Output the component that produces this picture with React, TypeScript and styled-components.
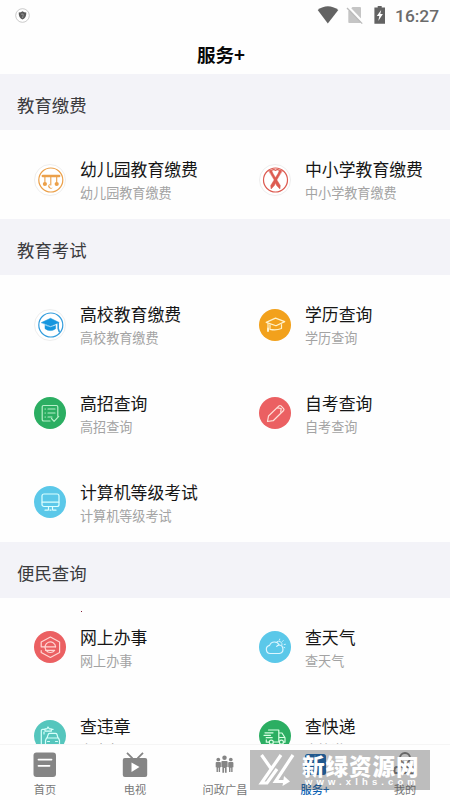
import React from "react";
import styled, { createGlobalStyle } from "styled-components";

const GlobalStyle = createGlobalStyle`
  * { box-sizing: border-box; }
  body { margin: 0; background: #fff; overflow: hidden; }
`;

const Screen = styled.div`
  position: relative;
  display: flex;
  flex-direction: column;
  width: 450px;
  height: 800px;
  overflow: hidden;
  background: #fefefe;
  font-family: "Noto Sans CJK SC", sans-serif;
`;

const StatusBar = styled.header`
  flex: none;
  display: flex;
  align-items: center;
  justify-content: space-between;
  height: 30px;
  padding: 0 10px 0 15px;
`;

const StatusIcons = styled.div`
  display: flex;
  align-items: center;
`;

const Clock = styled.span`
  width: 45px;
  margin-left: 10px;
  font: 500 17.4px/30px Roboto, sans-serif;
  color: #6b6b6b;
  padding-top: 2px;
`;

const TitleBar = styled.h1`
  flex: none;
  height: 44px;
  margin: 0;
  padding-right: 8px;
  text-align: center;
  font-size: 18.6px;
  font-weight: 700;
  line-height: 47px;
  color: #080808;
`;

const Content = styled.main`
  flex: 1;
  min-height: 0;
  overflow: hidden;
`;

const SectionTitle = styled.h2`
  height: 56.2px;
  margin: 0;
  padding-left: 17px;
  background: #f3f3f8;
  color: #3b3b3e;
  font-size: 17.4px;
  font-weight: 400;
  line-height: 61px;
`;

const Grid = styled.div`
  display: grid;
  grid-template-columns: 225px 225px;
  grid-auto-rows: 88.8px;
`;

const Service = styled.div`
  display: flex;
  padding: 26px 0 0 34px;
`;

const Badge = styled.span<{ $color?: string }>`
  flex: none;
  width: 32px;
  height: 32px;
  margin: 7.5px 14px 0 0;
  border-radius: 50%;
  background: ${(p) => p.$color ?? "#fff"};
  border: ${(p) => (p.$color ? "none" : "1px solid #eee")};
  display: flex;
  align-items: center;
  justify-content: center;
  svg { flex: none; display: block; }
`;

const ServiceName = styled.div`
  height: 26px;
  font-size: 16.85px;
  line-height: 26px;
  color: #161616;
  white-space: nowrap;
`;

const ServiceNote = styled.div`
  font-size: 13.1px;
  line-height: 22px;
  color: #a3a3a3;
  white-space: nowrap;
`;

const Dot = styled.i`
  position: absolute;
  left: 81px;
  top: 611px;
  width: 1px;
  height: 1px;
  background: #86213a;
`;

const TabBar = styled.nav`
  flex: none;
  display: grid;
  grid-template-columns: repeat(5, 90px);
  height: 56px;
  border-top: 1px solid #f5f5f5;
  background: #fefefe;
`;

const Tab = styled.div<{ $active?: boolean }>`
  display: flex;
  flex-direction: column;
  align-items: center;
  padding-top: 7px;
  font-size: 11.2px;
  line-height: 16px;
  color: ${(p) => (p.$active ? "#0c62b4" : "#777")};
  font-weight: ${(p) => (p.$active ? 500 : 400)};
  svg { display: block; margin-bottom: 3px; }
`;

const Watermark = styled.aside`
  position: absolute;
  left: 250px;
  top: 750px;
  width: 180px;
  height: 40px;
  display: flex;
  background: rgba(75, 75, 75, 0.36);
  color: #fff;
`;

const WatermarkWords = styled.div`
  display: flex;
  flex-direction: column;
  margin-left: 5px;
`;

const WatermarkName = styled.b`
  height: 26px;
  font-size: 22.5px;
  font-weight: 900;
  line-height: 30px;
  letter-spacing: 1px;
  white-space: nowrap;
`;

const WatermarkSite = styled.span`
  font: 700 9.5px/11px "Liberation Sans", sans-serif;
  letter-spacing: 4.1px;
  white-space: nowrap;
  padding-left: 3px;
`;

const Line = ({ children, color = "#fff" }: { children: React.ReactNode; color?: string }) => (
  <svg width="32" height="32" viewBox="0 0 32 32" fill="none" stroke={color} strokeWidth="1.2" strokeLinecap="round" strokeLinejoin="round">
    {children}
  </svg>
);

const icons = {
  mobile: (
    <Line color="#eba04a">
      <circle cx="16.8" cy="16" r="12" />
      <path d="M8.8 12h16.4" strokeWidth="2.4" />
      <path d="M10.9 13v6M16.8 13v8M22.7 13v6" strokeWidth="1.1" />
      <g fill="#eba04a" stroke="none">
        <circle cx="10.9" cy="20" r="2.1" />
        <circle cx="22.7" cy="20" r="2.1" />
        <path d="M16.4 19.8a2.5 2.5 0 1 0 2.4 3.8 2.2 2.2 0 0 1-2.4-3.8" />
      </g>
    </Line>
  ),
  scarf: (
    <Line color="#dd5b51">
      <circle cx="16.5" cy="16" r="12" />
      <g fill="#dd5b51" strokeWidth=".5">
        <path d="M10 6.8 12.3 5.8 14 9.5 18.2 16.5 21.3 21.5 20.9 25 17.6 21.5 15.2 16Z" />
        <path d="M23 6.8 20.7 5.8 19 9.5 14.8 16.5 11.7 21.5 12.1 25 15.4 21.5 17.8 16Z" />
      </g>
      <path d="M12.7 6.2q2.2-1.4 3.8.2 1.8-1.6 3.8-.2" />
    </Line>
  ),
  college: (
    <Line color="#339ddd">
      <circle cx="16.8" cy="16" r="12" />
      <g fill="#1696df" stroke="#1696df" strokeWidth=".5">
        <path d="m7.5 13.5 9-4.2 8.7 4.2-8.7 3.8Z" />
        <path d="M11 16.5v3.2q5.3 3.8 10.6 0v-3.2l-5.1 1.8Z" />
      </g>
      <path d="M24.2 14v5.5l1 3" strokeWidth="1.6" />
    </Line>
  ),
  cap: (
    <Line color="#fff2cb">
      <path d="m7.2 13.4 9.3-4.3 9.2 3.5-8.7 4.2Z" />
      <path d="M11 15.8v4.5q6 1.3 11.5-.8v-4M9 14.5V21" />
      <path d="M9 19.5V22" strokeWidth="2" />
    </Line>
  ),
  checklist: (
    <Line color="#b7efc9">
      <path d="M16 24H9.6q-1.4 0-1.4-1.4V9.9q0-1.4 1.4-1.4h12.8q1.4 0 1.4 1.4v9.3" />
      <path d="M11 12h.4M14 12h7M11 16h.4M14 16h7M11 20h.4M14 20h4M17.5 21.5l2.6 2.8 4.6-4.9" />
    </Line>
  ),
  pencil: (
    <Line color="#ffe0d9">
      <path d="m8.5 24.5 1-5.5L20 8.9q1-.8 2 0l2.6 2.7q.8 1 0 1.9L14.2 23.7Z" />
      <path d="m18.4 10.8 3.8.7-.5 3.6" />
    </Line>
  ),
  computer: (
    <Line color="#dcffff">
      <rect x="8" y="8" width="17" height="12.5" rx="2" />
      <path d="M8.2 16.2h16.6M14.5 20.8v3M18.5 20.8v3M11 24.2h3M16 24.2h1M19 24.2h3" />
    </Line>
  ),
  office: (
    <Line color="#ffd7d4">
      <path d="M7.2 19.5v2l9.2 5 9.2-5V11l-9.2-5-9.2 5v4.8h14.3" />
      <path d="M21.6 15.8a5.3 5.3 0 1 0-1 3.5H11.5" />
    </Line>
  ),
  weather: (
    <Line color="#dcf6ff">
      <path d="M11.2 22.5a4.1 4.1 0 0 1-.6-8.1A5.2 5.2 0 0 1 20.2 14a4.3 4.3 0 0 1 .2 8.5Z" />
      <path d="M18 10.6a3.4 3.4 0 0 1 5 3.6M20.5 9l.2-.9M23.5 10.4l.7-.8M25.2 13.5l1.2-.2M25 16.3l.8.4" strokeWidth=".9" />
      <path d="M20 14.1q-1.8.1-2.3 1.3" />
    </Line>
  ),
  violation: (
    <Line color="#d6fffa">
      <path d="M10 25H8.7q-1.4 0-1.4-1.4v-13q0-1.3 1.4-1.3H11M17.5 9.3h1.6M11 11.2V8.8h2l1-1.8 1.3 1.8h2v2.4Z" />
      <path d="m13 18 1.3-3.8q.3-.9 1.3-.9h6q1 0 1.3.9L24 18M12.5 18h12l1 2.5V25h-2.2l-.5 2M12.5 18l-1 2.5V25h3M14.5 25h9M13.5 21.5h2M21.5 21.5h2M10 12v2" />
    </Line>
  ),
  express: (
    <Line color="#d8ffe3">
      <path d="M9.5 10h10.3v12h-5M10 22.2H7.3v-2.3M6 12.8h8M5 15.3h6.5M7.2 17.7h6M20 13h3l3 4.8v4.4h-1.4M20 17.5h5.5" />
      <circle cx="12.3" cy="22.2" r="2" />
      <circle cx="22.4" cy="22.2" r="2" />
    </Line>
  ),
};

type ServiceItem = { name: string; icon: keyof typeof icons; color?: string };

const sections: { title: string; items: ServiceItem[] }[] = [
  { title: "教育缴费", items: [{ name: "幼儿园教育缴费", icon: "mobile" }, { name: "中小学教育缴费", icon: "scarf" }] },
  {
    title: "教育考试",
    items: [
      { name: "高校教育缴费", icon: "college" },
      { name: "学历查询", icon: "cap", color: "#f2a11c" },
      { name: "高招查询", icon: "checklist", color: "#2bae62" },
      { name: "自考查询", icon: "pencil", color: "#eb6062" },
      { name: "计算机等级考试", icon: "computer", color: "#5bc8e9" },
    ],
  },
  {
    title: "便民查询",
    items: [
      { name: "网上办事", icon: "office", color: "#eb6062" },
      { name: "查天气", icon: "weather", color: "#5bc8e9" },
      { name: "查违章", icon: "violation", color: "#55c6bd" },
      { name: "查快递", icon: "express", color: "#2bae62" },
    ],
  },
];

const Person = ({ x, y, s = 1 }: { x: number; y: number; s?: number }) => (
  <g transform={`translate(${x} ${y}) scale(${s})`}>
    <circle cx="0" cy="0" r="2" />
    <path d="M-1.8 2.8h3.6q1 0 1 1v4.4H1.9v5.2H.4V9H-.4v4.4h-1.5V8.2h-.9V3.8q0-1 1-1Z" />
  </g>
);

const tabs = [
  {
    name: "首页",
    icon: <><rect x="1.5" y=".5" width="22.5" height="24.5" rx="3" fill="#858585" /><path d="M6.5 7.6h13M6.5 13.8h11" stroke="#fff" strokeWidth="1.8" strokeLinecap="round" /></>,
  },
  {
    name: "电视",
    icon: <><path d="m5 .8 5.5 5.5M21 .8l-5.5 5.5" stroke="#858585" strokeWidth="1.8" /><rect x=".8" y="6" width="24.4" height="19" rx="2" fill="#858585" /><path d="m9.5 10.5 8 4.6-8 4.8Z" fill="#fff" /></>,
  },
  {
    name: "问政广昌",
    icon: <g fill="#858585"><Person x={6.3} y={7.5} s={0.93} /><Person x={12.5} y={5.8} s={1.12} /><Person x={18.8} y={7.5} s={0.93} /></g>,
  },
  {
    name: "服务+",
    active: true,
    icon: <><rect x="3" y="2" width="21" height="21" rx="2.5" fill="#0860b4" /><path d="M13 3v19M4 12.5h19" stroke="#fff" strokeWidth="1" opacity=".4" /></>,
  },
  {
    name: "我的",
    icon: <><circle cx="13" cy="6" r="5" fill="none" stroke="#777" strokeWidth="2" /><path d="M2.5 21v-3.5q0-2.5 2.5-2.5h16q2.5 0 2.5 2.5V21Z" fill="none" stroke="#777" strokeWidth="2" /></>,
  },
];

export default function App() {
  return (
    <Screen>
      <GlobalStyle />
      <StatusBar>
        <svg width="15" height="15" viewBox="0 0 15 15">
          <circle cx="7.5" cy="7.5" r="6.8" fill="#fff" stroke="#bdbdbd" strokeWidth=".8" />
          <path d="M7.5 3.2q2 1.3 3.8 1.2.2 5.2-3.8 7.1-4-1.9-3.8-7.1 1.8.1 3.8-1.2Z" fill="#5a5a5a" />
          <path d="M6 6.3q3-1.2 2.2 1L7.5 10" stroke="#bbb" strokeWidth=".6" fill="none" />
        </svg>
        <StatusIcons>
          <svg width="70" height="20" viewBox="0 0 70 20">
            <path d="M2.7 5Q12.8-2.4 23.3 5L12.8 18.6Z" fill="#636363" />
            <path d="m34.5 5 3-3H45q1 0 1 1v14.2q0 .8-1 .8H34.3q-1 0-1-.8V6Z" fill="#c5c5c5" />
            <path d="m33 1.5 15 15.8" stroke="#fefefe" strokeWidth="2.4" />
            <path d="m32 3 15.2 15.6" stroke="#bbb" strokeWidth="1.3" />
            <path d="M62.7 1h4v1.6H70v16.2H59.4V2.6h3.3Z" fill="#636363" />
            <path d="m66.2 5-4.4 6h2.5l-1 5 4.6-7h-2.6Z" fill="#fff" />
          </svg>
          <Clock>16:27</Clock>
        </StatusIcons>
      </StatusBar>
      <TitleBar>服务+</TitleBar>
      <Content>
        {sections.map((section) => (
          <section key={section.title}>
            <SectionTitle>{section.title}</SectionTitle>
            <Grid>
              {section.items.map((item) => (
                <Service key={item.name}>
                  <Badge $color={item.color}>{icons[item.icon]}</Badge>
                  <div>
                    <ServiceName>{item.name}</ServiceName>
                    <ServiceNote>{item.name}</ServiceNote>
                  </div>
                </Service>
              ))}
            </Grid>
          </section>
        ))}
      </Content>
      <TabBar>
        {tabs.map((tab) => (
          <Tab key={tab.name} $active={tab.active}>
            <svg width="26" height="26" viewBox="0 0 26 26">{tab.icon}</svg>
            {tab.name}
          </Tab>
        ))}
      </TabBar>
      <Dot />
      <Watermark>
        <svg width="47" height="40" viewBox="0 0 47 40" fill="none" stroke="#fff" strokeWidth="3.2">
          <path d="M11.5 5 21 18.5M31 5 11.5 33H17L27 19" />
          <path d="M43 5 25.5 31.5H36" />
          <path d="m34 26 6 5.5-7.5 4.5Z" fill="#fff" stroke="none" />
        </svg>
        <WatermarkWords>
          <WatermarkName>新绿资源网</WatermarkName>
          <WatermarkSite>www.xlhs.com</WatermarkSite>
        </WatermarkWords>
      </Watermark>
    </Screen>
  );
}
